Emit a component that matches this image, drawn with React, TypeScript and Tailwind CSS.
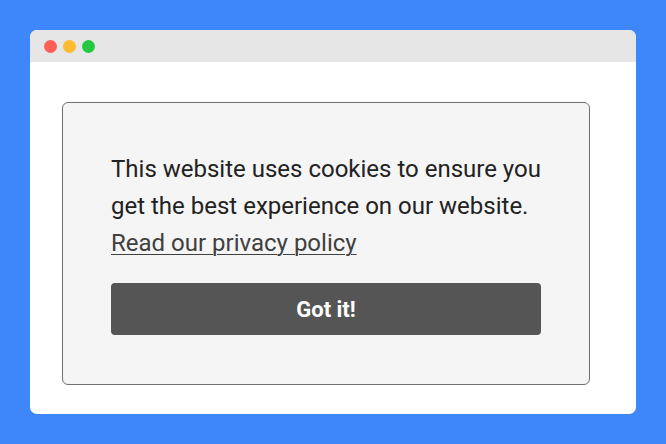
export default function App() {
  return (
    <div className="w-[666px] h-[444px] bg-[#3e87fb] pt-[30px] pl-[30px]" style={{ fontFamily: "Roboto, 'Liberation Sans', sans-serif" }}>
      <div className="w-[606px] h-[384px] bg-white rounded-[7px] overflow-hidden flex flex-col">
        <div className="h-[32px] bg-[#e6e6e6] flex items-center pl-[14px] gap-[6px] shrink-0">
          <div className="w-[13px] h-[13px] rounded-full bg-[#fe5f57]" />
          <div className="w-[13px] h-[13px] rounded-full bg-[#fdbb2f]" />
          <div className="w-[13px] h-[13px] rounded-full bg-[#27c841]" />
        </div>
        <div className="pt-[40px] pl-[32px]">
          <div className="w-[528px] h-[283px] bg-[#f5f5f5] border border-[#6f6f6f] rounded-[6px] pl-[48px] pr-[40px] pt-[48px]">
            <p className="text-[24px] leading-[37px] text-[#222222]">
              This website uses cookies to ensure you get the best experience on our website.{" "}
              <a className="underline text-[#404040] underline-offset-[3px] decoration-1" href="#">Read our privacy policy</a>
            </p>
            <button className="mt-[21px] w-[430px] h-[52px] bg-[#555555] rounded-[4px] text-white font-bold text-[22px]">
              Got it!
            </button>
          </div>
        </div>
      </div>
    </div>
  );
}
